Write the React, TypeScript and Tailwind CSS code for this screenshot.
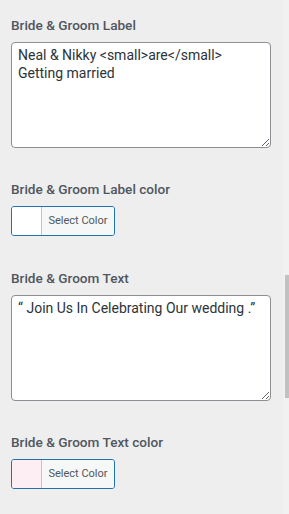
import React from "react";

const font = { fontFamily: "Roboto, 'Liberation Sans', sans-serif" };

function Label({ children }: { children: React.ReactNode }) {
  return (
    <div className="text-[13.6px] leading-[18px] font-medium text-[#50575e] mb-2">
      {children}
    </div>
  );
}

function TextBox({ value }: { value: string }) {
  return (
    <textarea
      readOnly
      defaultValue={value}
      className="block w-[260px] h-[106px] bg-white border border-[#8c8f94] rounded-[4px] px-[6px] py-[3px] text-[14px] leading-[18px] text-[#2c3338] outline-none"
      style={font}
    />
  );
}

function ColorButton({ swatch }: { swatch: string }) {
  return (
    <div className="flex w-[104px] h-[30px] border border-[#2271b1] rounded-[3px] overflow-hidden">
      <div className={`w-[30px] border-r border-[#c3c4c7] ${swatch}`} />
      <div className="flex-1 bg-[#f6f7f7] flex items-center justify-center text-[11px] text-[#50575e]">
        Select Color
      </div>
    </div>
  );
}

export default function App() {
  return (
    <div className="flex w-[289px] h-[514px] bg-[#eeeeee] overflow-hidden" style={font}>
      <div className="flex-1 pl-[11px] pt-4">
        <Label>Bride &amp; Groom Label</Label>
        <TextBox value={"Neal & Nikky <small>are</small>\nGetting married"} />

        <div className="mt-8">
          <Label>Bride &amp; Groom Label color</Label>
          <ColorButton swatch="bg-white" />
        </div>

        <div className="mt-[33px]">
          <Label>Bride &amp; Groom Text</Label>
          <TextBox value={"\u201C Join Us In Celebrating Our wedding .\u201D"} />
        </div>

        <div className="mt-8">
          <Label>Bride &amp; Groom Text color</Label>
          <ColorButton swatch="bg-[#fdeef3]" />
        </div>
      </div>
      <div className="w-[6px] bg-[#f1f1f1] pt-[275px]">
        <div className="ml-auto w-[4px] h-[123px] bg-[#c1c1c1]" />
      </div>
    </div>
  );
}
